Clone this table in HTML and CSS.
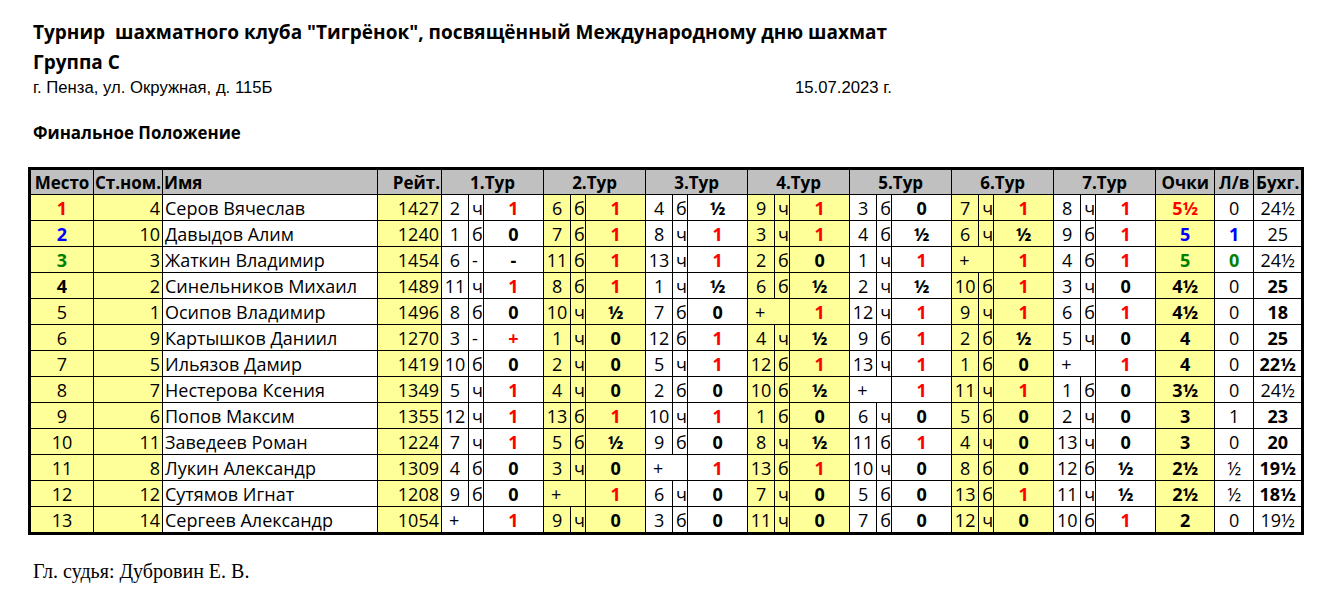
FILE: index.html
```html
<!DOCTYPE html>
<html lang="ru">
<head>
<meta charset="utf-8">
<title>Финальное Положение</title>
<link rel="stylesheet" href="styles.css">
</head>
<body>
<div class="head">
  <div class="title">Турнир&nbsp; шахматного клуба "Тигрёнок", посвящённый Международному дню шахмат</div>
  <div class="group">Группа С</div>
  <div class="addr"><span class="place-txt">г. Пенза, ул. Окружная, д. 115Б</span><span>15.07.2023 г.</span></div>
  <div class="sub">Финальное Положение</div>
</div>
<table class="grid">
  <colgroup>
    <col class="w-pl"><col class="w-sn"><col class="w-nm"><col class="w-rt">
    <col class="w-n"><col class="w-c"><col class="w-r">
    <col class="w-n"><col class="w-c"><col class="w-r">
    <col class="w-n"><col class="w-c"><col class="w-r">
    <col class="w-n"><col class="w-c"><col class="w-r">
    <col class="w-n"><col class="w-c"><col class="w-r">
    <col class="w-n"><col class="w-c"><col class="w-r">
    <col class="w-n"><col class="w-c"><col class="w-r">
    <col class="w-pt"><col class="w-lv"><col class="w-bh">
  </colgroup>
  <thead>
    <tr>
      <th class="h-c">Место</th><th class="h-l">Ст.ном.</th><th class="h-l">Имя</th><th class="h-r">Рейт.</th>
      <th colspan="3">1.Тур</th><th colspan="3">2.Тур</th><th colspan="3">3.Тур</th><th colspan="3">4.Тур</th>
      <th colspan="3">5.Тур</th><th colspan="3">6.Тур</th><th colspan="3">7.Тур</th>
      <th>Очки</th><th>Л/в</th><th>Бухг.</th>
    </tr>
  </thead>
  <tbody>
    <tr>
      <td class="pl y b red">1</td><td class="sn y">4</td><td class="nm">Серов Вячеслав</td><td class="rt y">1427</td>
      <td class="n">2</td><td class="c">ч</td><td class="r red">1</td>
      <td class="n y">6</td><td class="c y">б</td><td class="r y red">1</td>
      <td class="n">4</td><td class="c">б</td><td class="r">½</td>
      <td class="n y">9</td><td class="c y">ч</td><td class="r y red">1</td>
      <td class="n">3</td><td class="c">б</td><td class="r">0</td>
      <td class="n y">7</td><td class="c y">ч</td><td class="r y red">1</td>
      <td class="n">8</td><td class="c">ч</td><td class="r red">1</td>
      <td class="pt y red">5½</td><td class="lv">0</td><td class="bh">24½</td>
    </tr>
    <tr>
      <td class="pl y b blue">2</td><td class="sn y">10</td><td class="nm">Давыдов Алим</td><td class="rt y">1240</td>
      <td class="n">1</td><td class="c">б</td><td class="r">0</td>
      <td class="n y">7</td><td class="c y">б</td><td class="r y red">1</td>
      <td class="n">8</td><td class="c">ч</td><td class="r red">1</td>
      <td class="n y">3</td><td class="c y">ч</td><td class="r y red">1</td>
      <td class="n">4</td><td class="c">б</td><td class="r">½</td>
      <td class="n y">6</td><td class="c y">ч</td><td class="r y">½</td>
      <td class="n">9</td><td class="c">б</td><td class="r red">1</td>
      <td class="pt y blue">5</td><td class="lv b blue">1</td><td class="bh">25</td>
    </tr>
    <tr>
      <td class="pl y b green">3</td><td class="sn y">3</td><td class="nm">Жаткин Владимир</td><td class="rt y">1454</td>
      <td class="n">6</td><td class="c">-</td><td class="r">-</td>
      <td class="n y">11</td><td class="c y">б</td><td class="r y red">1</td>
      <td class="n">13</td><td class="c">ч</td><td class="r red">1</td>
      <td class="n y">2</td><td class="c y">б</td><td class="r y">0</td>
      <td class="n">1</td><td class="c">ч</td><td class="r red">1</td>
      <td class="f y" colspan="2">+</td><td class="r y red">1</td>
      <td class="n">4</td><td class="c">б</td><td class="r red">1</td>
      <td class="pt y green">5</td><td class="lv b green">0</td><td class="bh">24½</td>
    </tr>
    <tr>
      <td class="pl y b">4</td><td class="sn y">2</td><td class="nm">Синельников Михаил</td><td class="rt y">1489</td>
      <td class="n">11</td><td class="c">ч</td><td class="r red">1</td>
      <td class="n y">8</td><td class="c y">б</td><td class="r y red">1</td>
      <td class="n">1</td><td class="c">ч</td><td class="r">½</td>
      <td class="n y">6</td><td class="c y">б</td><td class="r y">½</td>
      <td class="n">2</td><td class="c">ч</td><td class="r">½</td>
      <td class="n y">10</td><td class="c y">б</td><td class="r y red">1</td>
      <td class="n">3</td><td class="c">ч</td><td class="r">0</td>
      <td class="pt y">4½</td><td class="lv">0</td><td class="bh b">25</td>
    </tr>
    <tr>
      <td class="pl y">5</td><td class="sn y">1</td><td class="nm">Осипов Владимир</td><td class="rt y">1496</td>
      <td class="n">8</td><td class="c">б</td><td class="r">0</td>
      <td class="n y">10</td><td class="c y">ч</td><td class="r y">½</td>
      <td class="n">7</td><td class="c">б</td><td class="r">0</td>
      <td class="f y" colspan="2">+</td><td class="r y red">1</td>
      <td class="n">12</td><td class="c">ч</td><td class="r red">1</td>
      <td class="n y">9</td><td class="c y">ч</td><td class="r y red">1</td>
      <td class="n">6</td><td class="c">б</td><td class="r red">1</td>
      <td class="pt y">4½</td><td class="lv">0</td><td class="bh b">18</td>
    </tr>
    <tr>
      <td class="pl y">6</td><td class="sn y">9</td><td class="nm">Картышков Даниил</td><td class="rt y">1270</td>
      <td class="n">3</td><td class="c">-</td><td class="r red">+</td>
      <td class="n y">1</td><td class="c y">ч</td><td class="r y">0</td>
      <td class="n">12</td><td class="c">б</td><td class="r red">1</td>
      <td class="n y">4</td><td class="c y">ч</td><td class="r y">½</td>
      <td class="n">9</td><td class="c">б</td><td class="r red">1</td>
      <td class="n y">2</td><td class="c y">б</td><td class="r y">½</td>
      <td class="n">5</td><td class="c">ч</td><td class="r">0</td>
      <td class="pt y">4</td><td class="lv">0</td><td class="bh b">25</td>
    </tr>
    <tr>
      <td class="pl y">7</td><td class="sn y">5</td><td class="nm">Ильязов Дамир</td><td class="rt y">1419</td>
      <td class="n">10</td><td class="c">б</td><td class="r">0</td>
      <td class="n y">2</td><td class="c y">ч</td><td class="r y">0</td>
      <td class="n">5</td><td class="c">ч</td><td class="r red">1</td>
      <td class="n y">12</td><td class="c y">б</td><td class="r y red">1</td>
      <td class="n">13</td><td class="c">ч</td><td class="r red">1</td>
      <td class="n y">1</td><td class="c y">б</td><td class="r y">0</td>
      <td class="f" colspan="2">+</td><td class="r red">1</td>
      <td class="pt y">4</td><td class="lv">0</td><td class="bh b">22½</td>
    </tr>
    <tr>
      <td class="pl y">8</td><td class="sn y">7</td><td class="nm">Нестерова Ксения</td><td class="rt y">1349</td>
      <td class="n">5</td><td class="c">ч</td><td class="r red">1</td>
      <td class="n y">4</td><td class="c y">ч</td><td class="r y">0</td>
      <td class="n">2</td><td class="c">б</td><td class="r">0</td>
      <td class="n y">10</td><td class="c y">б</td><td class="r y">½</td>
      <td class="f" colspan="2">+</td><td class="r red">1</td>
      <td class="n y">11</td><td class="c y">ч</td><td class="r y red">1</td>
      <td class="n">1</td><td class="c">б</td><td class="r">0</td>
      <td class="pt y">3½</td><td class="lv">0</td><td class="bh">24½</td>
    </tr>
    <tr>
      <td class="pl y">9</td><td class="sn y">6</td><td class="nm">Попов Максим</td><td class="rt y">1355</td>
      <td class="n">12</td><td class="c">ч</td><td class="r red">1</td>
      <td class="n y">13</td><td class="c y">б</td><td class="r y red">1</td>
      <td class="n">10</td><td class="c">ч</td><td class="r red">1</td>
      <td class="n y">1</td><td class="c y">б</td><td class="r y">0</td>
      <td class="n">6</td><td class="c">ч</td><td class="r">0</td>
      <td class="n y">5</td><td class="c y">б</td><td class="r y">0</td>
      <td class="n">2</td><td class="c">ч</td><td class="r">0</td>
      <td class="pt y">3</td><td class="lv">1</td><td class="bh b">23</td>
    </tr>
    <tr>
      <td class="pl y">10</td><td class="sn y">11</td><td class="nm">Заведеев Роман</td><td class="rt y">1224</td>
      <td class="n">7</td><td class="c">ч</td><td class="r red">1</td>
      <td class="n y">5</td><td class="c y">б</td><td class="r y">½</td>
      <td class="n">9</td><td class="c">б</td><td class="r">0</td>
      <td class="n y">8</td><td class="c y">ч</td><td class="r y">½</td>
      <td class="n">11</td><td class="c">б</td><td class="r red">1</td>
      <td class="n y">4</td><td class="c y">ч</td><td class="r y">0</td>
      <td class="n">13</td><td class="c">ч</td><td class="r">0</td>
      <td class="pt y">3</td><td class="lv">0</td><td class="bh b">20</td>
    </tr>
    <tr>
      <td class="pl y">11</td><td class="sn y">8</td><td class="nm">Лукин Александр</td><td class="rt y">1309</td>
      <td class="n">4</td><td class="c">б</td><td class="r">0</td>
      <td class="n y">3</td><td class="c y">ч</td><td class="r y">0</td>
      <td class="f" colspan="2">+</td><td class="r red">1</td>
      <td class="n y">13</td><td class="c y">б</td><td class="r y red">1</td>
      <td class="n">10</td><td class="c">ч</td><td class="r">0</td>
      <td class="n y">8</td><td class="c y">б</td><td class="r y">0</td>
      <td class="n">12</td><td class="c">б</td><td class="r">½</td>
      <td class="pt y">2½</td><td class="lv">½</td><td class="bh b">19½</td>
    </tr>
    <tr>
      <td class="pl y">12</td><td class="sn y">12</td><td class="nm">Сутямов Игнат</td><td class="rt y">1208</td>
      <td class="n">9</td><td class="c">б</td><td class="r">0</td>
      <td class="f y" colspan="2">+</td><td class="r y red">1</td>
      <td class="n">6</td><td class="c">ч</td><td class="r">0</td>
      <td class="n y">7</td><td class="c y">ч</td><td class="r y">0</td>
      <td class="n">5</td><td class="c">б</td><td class="r">0</td>
      <td class="n y">13</td><td class="c y">б</td><td class="r y red">1</td>
      <td class="n">11</td><td class="c">ч</td><td class="r">½</td>
      <td class="pt y">2½</td><td class="lv">½</td><td class="bh b">18½</td>
    </tr>
    <tr>
      <td class="pl y">13</td><td class="sn y">14</td><td class="nm">Сергеев Александр</td><td class="rt y">1054</td>
      <td class="f" colspan="2">+</td><td class="r red">1</td>
      <td class="n y">9</td><td class="c y">ч</td><td class="r y">0</td>
      <td class="n">3</td><td class="c">б</td><td class="r">0</td>
      <td class="n y">11</td><td class="c y">ч</td><td class="r y">0</td>
      <td class="n">7</td><td class="c">б</td><td class="r">0</td>
      <td class="n y">12</td><td class="c y">ч</td><td class="r y">0</td>
      <td class="n">10</td><td class="c">б</td><td class="r red">1</td>
      <td class="pt y">2</td><td class="lv">0</td><td class="bh">19½</td>
    </tr>
  </tbody>
</table>
<div class="judge">Гл. судья: Дубровин Е. В.</div>
</body>
</html>
```
FILE: styles.css
```css
html, body {
  margin: 0;
  padding: 0;
  background: #ffffff;
  color: #000000;
}
body {
  font-family: "Open Sans", "Noto Sans", sans-serif;
}
.head {
  padding-left: 33px;
}
.title {
  font-weight: bold;
  font-size: 19px;
  line-height: 30px;
  margin-top: 17px;
  white-space: pre;
}
.group {
  font-weight: bold;
  font-size: 19px;
  line-height: 30px;
}
.addr {
  display: flex;
  font-family: "Liberation Sans", Arial, sans-serif;
  font-size: 16.7px;
  line-height: 20px;
  margin-top: 1px;
}
.place-txt {
  width: 762px;
}
.sub {
  font-weight: bold;
  font-size: 16.9px;
  line-height: 20px;
  margin-top: 25px;
}
.grid {
  margin: 24px 0 0 28px;
  border-collapse: collapse;
  table-layout: fixed;
  width: 1274px;
  border: 3px solid #000;
  font-size: 18px;
}
.w-pl { width: 64px; }
.w-sn { width: 69px; }
.w-nm { width: 215px; }
.w-rt { width: 64px; }
.w-n { width: 27px; }
.w-c { width: 15px; }
.w-r { width: 60px; }
.w-pt { width: 59px; }
.w-lv { width: 39px; }
.w-bh { width: 49px; }
.grid th {
  background: #c0c0c0;
  font-weight: bold;
  font-size: 17px;
  height: 24px;
  padding: 0 1px;
  border: 1px solid #000;
  text-align: center;
  white-space: nowrap;
  overflow: hidden;
}
.grid th.h-l { text-align: left; }
.grid th.h-r { text-align: right; }
.grid td {
  height: 25px;
  padding: 0 2px;
  border: 1px solid #000;
  white-space: nowrap;
  overflow: hidden;
  text-align: center;
}
.grid td.sn, .grid td.rt { text-align: right; }
.grid td.nm { text-align: left; }
.grid td.n { text-align: center; padding: 0; }
.grid td.c { text-align: left; padding: 0 0 0 3px; }
.grid td.r { font-weight: bold; }
.grid td.f { text-align: left; padding-left: 7px; }
.grid td.pt { font-weight: bold; }
.y { background: #ffff99; }
.b { font-weight: bold; }
.red { color: #ff0000; }
.blue { color: #0000ff; }
.green { color: #008000; }
.judge {
  font-family: "Liberation Serif", "Times New Roman", serif;
  font-size: 20px;
  line-height: 24px;
  margin: 24px 0 0 33px;
}
```
